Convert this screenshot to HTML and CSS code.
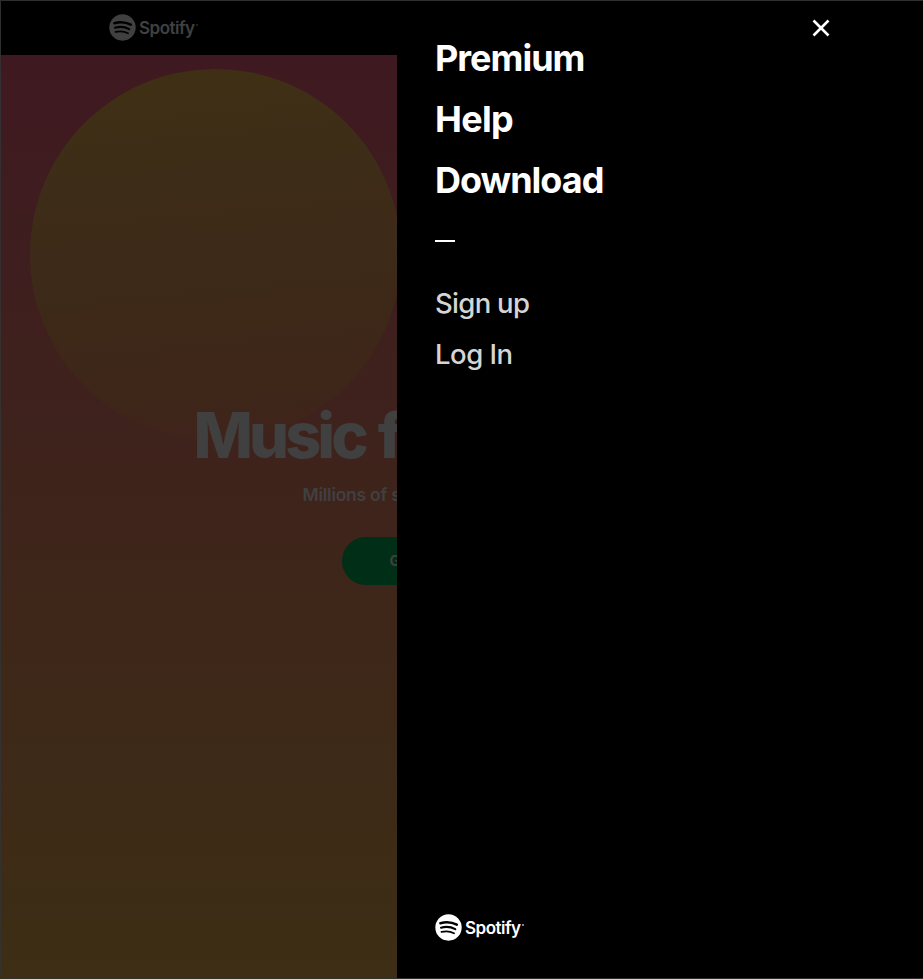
FILE: index.html
```html
<!DOCTYPE html>
<html lang="en">
<head>
<meta charset="utf-8">
<title>Spotify</title>
<link rel="stylesheet" href="styles.css">
</head>
<body>
<svg class="defs" width="0" height="0" aria-hidden="true">
  <symbol id="mark" viewBox="0 0 26 26">
    <mask id="waves">
      <circle cx="13" cy="13" r="12.700" fill="#fff"/>
      <g fill="none" stroke="#000" stroke-linecap="round">
        <path stroke-width="2.500" d="M5.200 8.800C10.600 7.300 16.500 7.900 21 10.300"/>
        <path stroke-width="2.100" d="M5.800 13.200C10.500 11.900 15.500 12.400 19.500 14.600"/>
        <path stroke-width="1.700" d="M6.300 17.300C10.400 16.300 14.800 16.700 18.300 18.600"/>
      </g>
    </mask>
    <rect width="26" height="26" fill="currentColor" mask="url(#waves)"/>
  </symbol>
</svg>
<div class="page">
  <header class="topbar">
    <a class="logo"><svg class="mark"><use href="#mark"/></svg><span class="word">Spotify</span><i class="tm"></i></a>
  </header>
  <main class="hero">
    <div class="sun"></div>
    <h1 class="title">Music for everyone.</h1>
    <p class="tagline">Millions of songs. No credit card needed.</p>
    <a class="cta">GET SPOTIFY FREE</a>
  </main>
</div>
<aside class="menu">
  <svg class="close" viewBox="0 0 18 18"><path d="M1.500 1.500 16.500 16.500M16.500 1.500 1.500 16.500"/></svg>
  <nav class="links">
    <a class="primary premium">Premium</a>
    <a class="primary help">Help</a>
    <a class="primary download">Download</a>
    <hr class="rule">
    <a class="secondary signup">Sign up</a>
    <a class="secondary login">Log In</a>
  </nav>
  <a class="logo"><svg class="mark"><use href="#mark"/></svg><span class="word">Spotify</span><i class="tm"></i></a>
</aside>
<div class="frame"></div>
</body>
</html>
```
FILE: styles.css
```css
* { box-sizing: border-box; }
body {
  margin: 0;
  width: 923px;
  height: 979px;
  overflow: hidden;
  position: relative;
  background: #000;
  font-family: Inter, "Liberation Sans", sans-serif;
}
.defs { position: absolute; }
.page { height: 979px; display: flex; flex-direction: column; color: #404040; }
.topbar { height: 55px; flex: none; background: #000; padding: 14px 0 0 109px; }
.logo { display: flex; align-items: center; height: 27px; }
.mark { width: 27px; height: 27px; flex: none; }
.word {
  margin-left: 3px;
  font-size: 17px;
  font-weight: 600;
  letter-spacing: -0.5px;
  line-height: 28px;
}
.tm { width: 2px; height: 2px; margin: -5px 0 0 1px; background: currentColor; opacity: .5; }
.hero {
  flex: 1;
  position: relative;
  display: flex;
  flex-direction: column;
  align-items: center;
  padding-top: 344px;
  background: linear-gradient(180deg, #3f1921 0%, #3e261a 58%, #3d2e14 100%);
}
.sun {
  position: absolute;
  left: 30px;
  top: 14px;
  width: 371px;
  height: 371px;
  border-radius: 50%;
  background: linear-gradient(175deg, #3f3014 0%, #3d2c18 35%, #3e2619 85%, #3f231b 100%);
}
.title {
  position: relative;
  width: 536px;
  margin: 0;
  font-size: 63px;
  line-height: 72px;
  font-weight: 800;
  letter-spacing: -3.900px;
  word-spacing: 3px;
  white-space: nowrap;
}
.tagline { width: 318px; margin: 13px 0 0; font-size: 17.500px; line-height: 22px; font-weight: 600; letter-spacing: -0.250px; white-space: nowrap; }
.cta {
  width: 239px;
  height: 48px;
  margin-top: 31px;
  padding-left: 47.500px;
  border-radius: 24px;
  background: #002e16;
  font-size: 14px;
  line-height: 48px;
  font-weight: 700;
  white-space: nowrap;
}
.menu {
  position: absolute;
  left: 397px;
  top: 0;
  width: 526px;
  height: 979px;
  padding: 28px 38px 38px;
  display: flex;
  flex-direction: column;
  justify-content: space-between;
  background: #000;
  color: #fff;
}
.close { position: absolute; left: 415px; top: 18.500px; width: 18px; height: 18px; fill: none; stroke: #fff; stroke-width: 2.600; }
.links { display: flex; flex-direction: column; align-items: flex-start; }
.primary { height: 61px; font-size: 36px; line-height: 61px; font-weight: 700; letter-spacing: -1px; }
.help { letter-spacing: -0.700px; }
.rule { width: 20px; height: 2px; margin: 29px 0 36px; border: 0; background: #fff; }
.secondary { height: 51px; font-size: 27.500px; line-height: 51px; font-weight: 500; letter-spacing: -0.7px; color: #d5d5d5; }
.login { letter-spacing: -0.500px; }
.frame { position: absolute; inset: 0; border: solid #333; border-width: 1px 0 1px 1px; border-bottom-left-radius: 5px; opacity: .9; }
```
